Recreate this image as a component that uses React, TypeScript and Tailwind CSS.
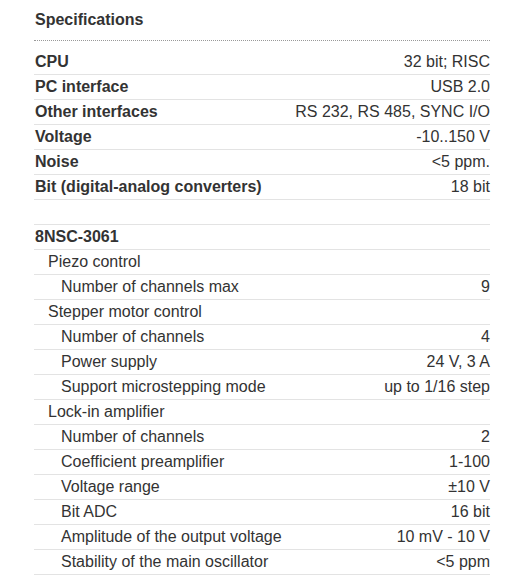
import React from "react";

type Row = { label: string; value?: string; level: 0 | 1 | 2; bold?: boolean };

const rows: Row[] = [
  { label: "CPU", value: "32 bit; RISC", level: 0, bold: true },
  { label: "PC interface", value: "USB 2.0", level: 0, bold: true },
  { label: "Other interfaces", value: "RS 232, RS 485, SYNC I/O", level: 0, bold: true },
  { label: "Voltage", value: "-10..150 V", level: 0, bold: true },
  { label: "Noise", value: "<5 ppm.", level: 0, bold: true },
  { label: "Bit (digital-analog converters)", value: "18 bit", level: 0, bold: true },
  { label: "", value: "", level: 0 },
  { label: "8NSC-3061", value: "", level: 0, bold: true },
  { label: "Piezo control", level: 1 },
  { label: "Number of channels max", value: "9", level: 2 },
  { label: "Stepper motor control", level: 1 },
  { label: "Number of channels", value: "4", level: 2 },
  { label: "Power supply", value: "24 V, 3 A", level: 2 },
  { label: "Support microstepping mode", value: "up to 1/16 step", level: 2 },
  { label: "Lock-in amplifier", level: 1 },
  { label: "Number of channels", value: "2", level: 2 },
  { label: "Coefficient preamplifier", value: "1-100", level: 2 },
  { label: "Voltage range", value: "±10 V", level: 2 },
  { label: "Bit ADC", value: "16 bit", level: 2 },
  { label: "Amplitude of the output voltage", value: "10 mV - 10 V", level: 2 },
  { label: "Stability of the main oscillator", value: "<5 ppm", level: 2 },
];

const pad = ["pl-[1px]", "pl-[14px]", "pl-[27px]"];

export default function App() {
  return (
    <div
      className="bg-white w-[509px] h-[576px] overflow-hidden text-[#333] text-[16px] leading-[24px]"
      style={{ fontFamily: '"Liberation Sans", Arial, sans-serif' }}
    >
      <div className="pl-[34px] w-[490px]">
        <div className="pt-[8px] pb-[8px] border-b border-dotted border-[#999] font-bold pl-[1px]">
          Specifications
        </div>
        <div className="mt-[9px] flex flex-col">
          {rows.map((r, i) => (
            <div
              key={i}
              className="flex justify-between h-[25px] border-b border-[#e3e3e3] whitespace-nowrap"
            >
              <span className={`${pad[r.level]} ${r.bold ? "font-bold" : ""}`}>{r.label}</span>
              <span>{r.value}</span>
            </div>
          ))}
        </div>
      </div>
    </div>
  );
}
